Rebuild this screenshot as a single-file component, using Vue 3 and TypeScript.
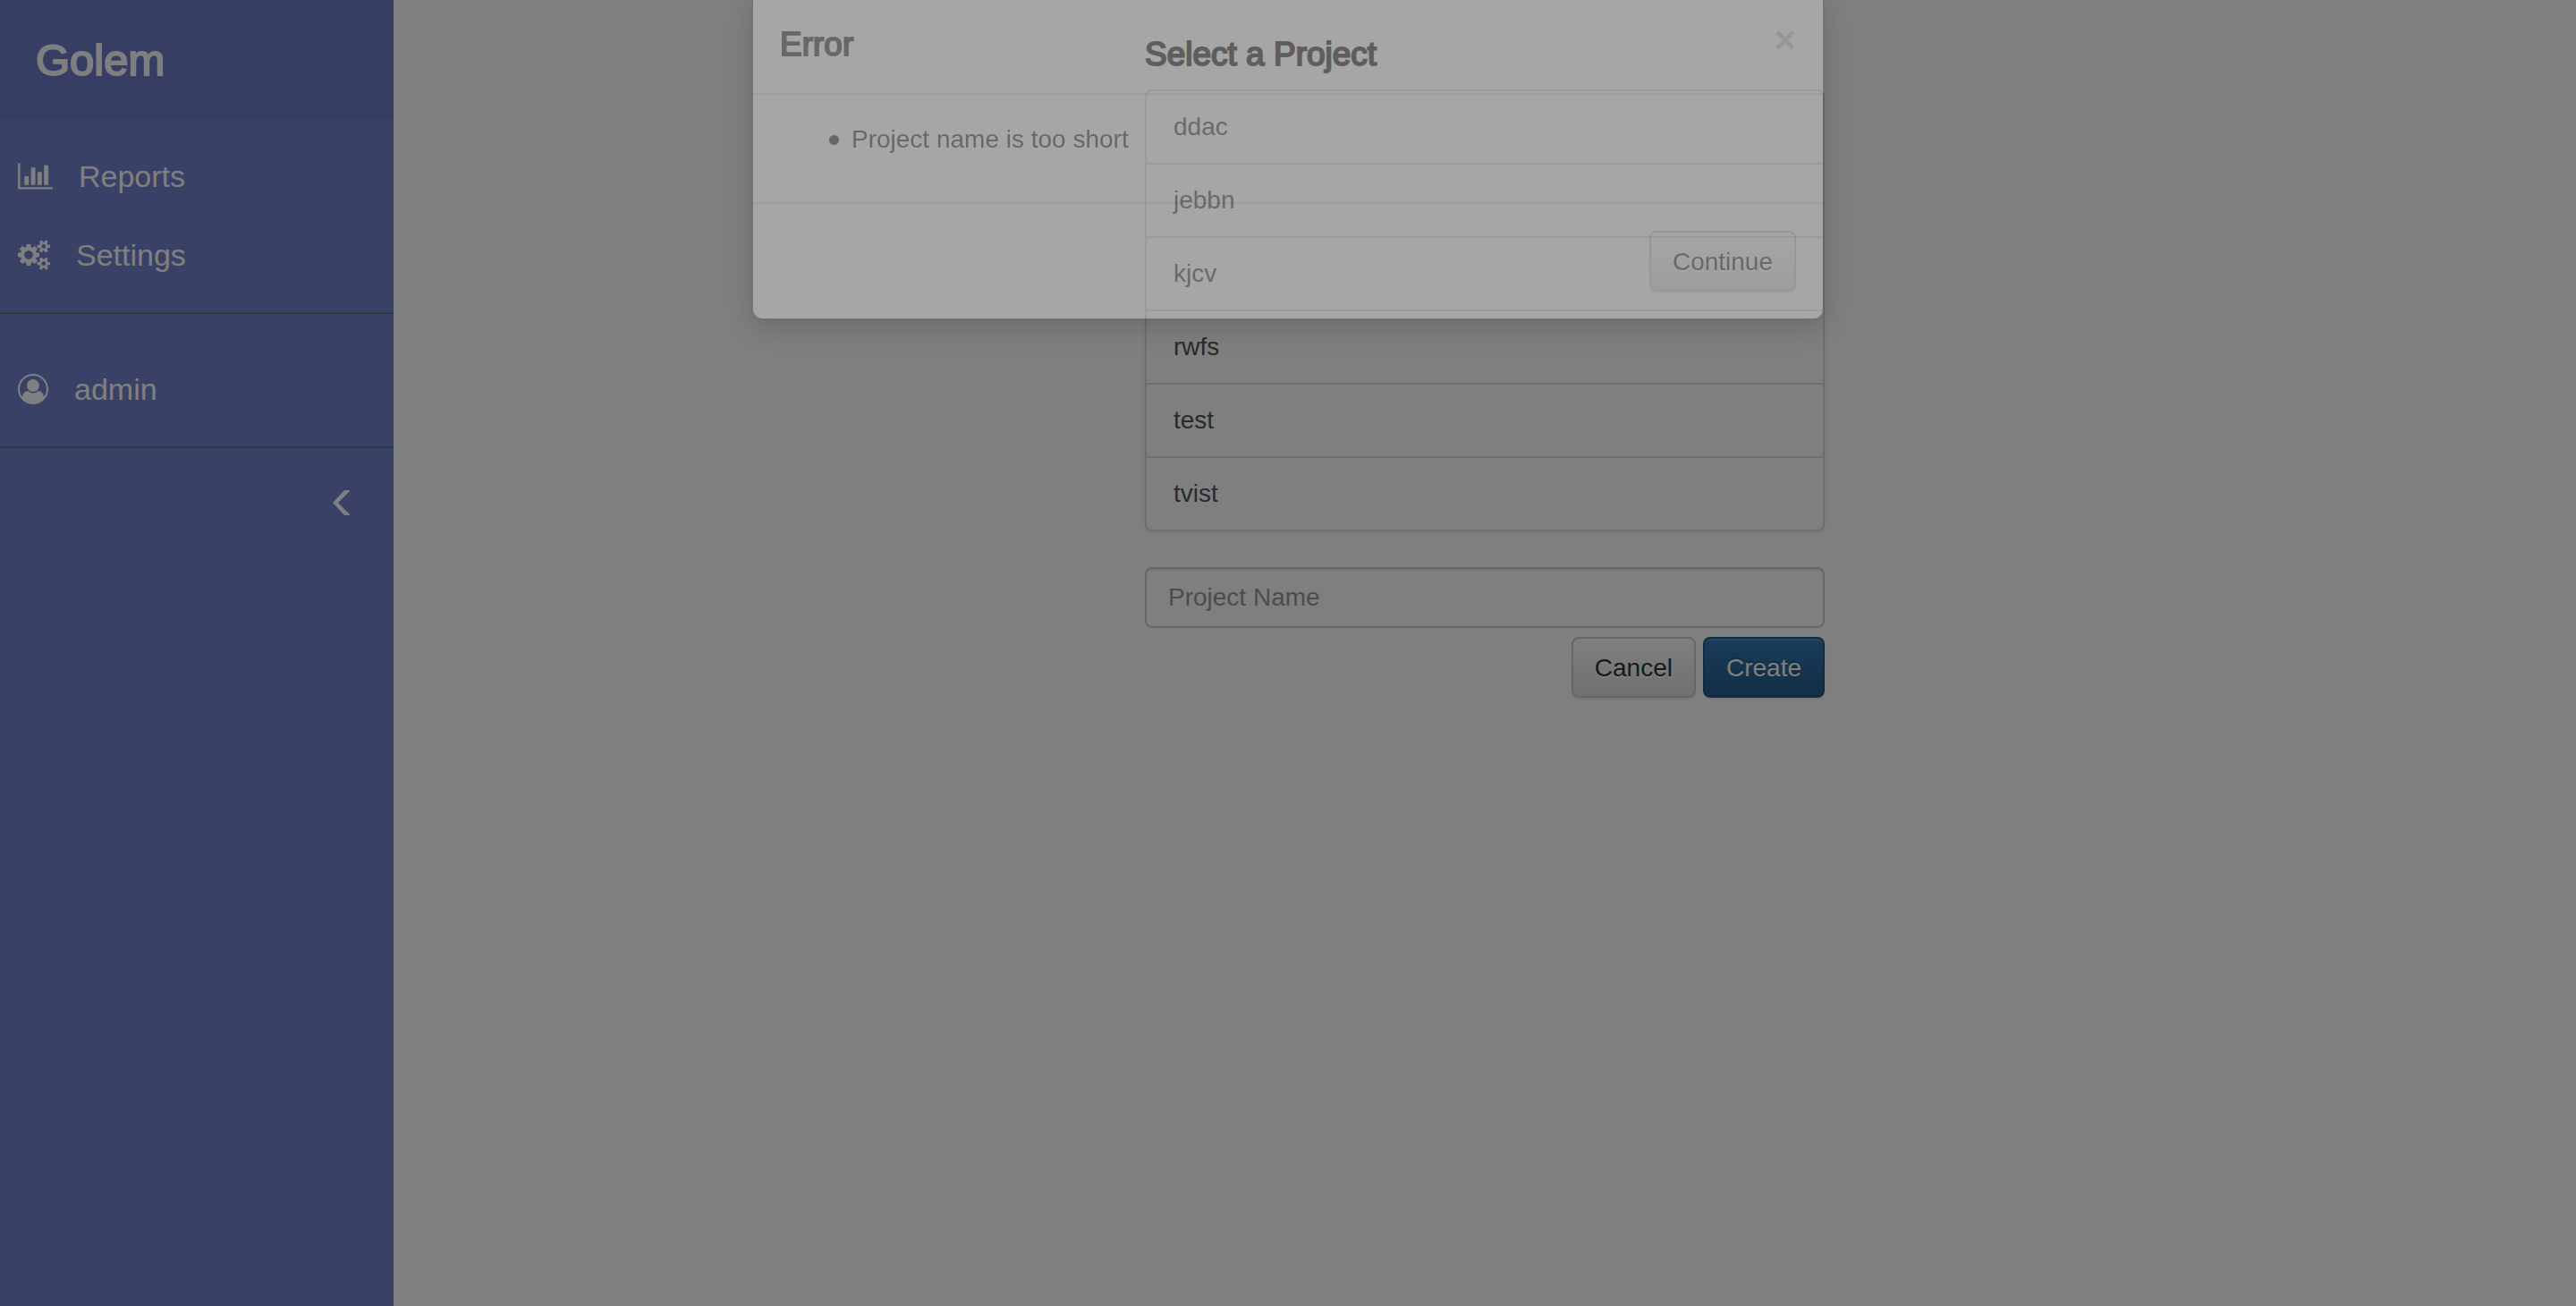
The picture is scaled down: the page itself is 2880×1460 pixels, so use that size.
<script setup lang="ts">
import { ref } from 'vue'

interface Icon {
  width: number
  viewBox: string
  path: string
}

interface NavItem {
  label: string
  icon: Icon
}

const chartIcon: Icon = {
  width: 39,
  viewBox: '0 0 2048 1792',
  path: 'M640 896v512h-256v-512h256zm384-512v1024h-256v-1024h256zm1024 1152v128h-2048v-1536h128v1408h1920zm-640-896v768h-256v-768h256zm384-384v1152h-256v-1152h256z',
}

const cogsIcon: Icon = {
  width: 36,
  viewBox: '0 0 1920 1792',
  path: 'M896 896q0-106-75-181t-181-75-181 75-75 181 75 181 181 75 181-75 75-181zm768 512q0-52-38-90t-90-38-90 38-38 90q0 53 37.5 90.5t90.5 37.5 90.5-37.5 37.5-90.5zm0-1024q0-52-38-90t-90-38-90 38-38 90q0 53 37.5 90.5t90.5 37.5 90.5-37.5 37.5-90.5zm-384 421v185q0 10-7 19.5t-16 10.5l-155 24q-11 35-32 76 34 48 90 115 7 11 7 20 0 12-7 19-23 30-82.5 89.5t-78.5 59.5q-11 0-21-7l-115-90q-37 19-77 31-11 108-23 155-7 24-30 24h-186q-11 0-20-7.5t-10-17.5l-23-153q-34-10-75-31l-118 89q-7 7-20 7-11 0-21-8-144-133-144-160 0-9 7-19 10-14 41-53t47-61q-23-44-35-82l-152-24q-10-1-17-9.5t-7-19.5v-185q0-10 7-19.5t16-10.5l155-24q11-35 32-76-34-48-90-115-7-11-7-20 0-12 7-20 22-30 82-89t79-59q11 0 21 7l115 90q34-18 77-32 11-108 23-154 7-24 30-24h186q11 0 20 7.5t10 17.5l23 153q34 10 75 31l118-89q8-7 20-7 11 0 21 8 144 133 144 160 0 8-7 19-12 16-42 54t-45 60q23 48 34 82l152 23q10 2 17 10.5t7 19.5zm640 533v140q0 16-149 31-12 27-30 52 51 113 51 138 0 4-4 7-122 71-124 71-8 0-46-47t-52-68q-20 2-30 2t-30-2q-14 21-52 68t-46 47q-2 0-124-71-4-3-4-7 0-25 51-138-18-25-30-52-149-15-149-31v-140q0-16 149-31 13-29 30-52-51-113-51-138 0-4 4-7 4-2 35-20t59-34 30-16q8 0 46 46.5t52 67.5q20-2 30-2t30 2q51-71 92-112l6-2q4 0 124 70 4 3 4 7 0 25-51 138 17 23 30 52 149 15 149 31zm0-1024v140q0 16-149 31-12 27-30 52 51 113 51 138 0 4-4 7-122 71-124 71-8 0-46-47t-52-68q-20 2-30 2t-30-2q-14 21-52 68t-46 47q-2 0-124-71-4-3-4-7 0-25 51-138-18-25-30-52-149-15-149-31v-140q0-16 149-31 13-29 30-52-51-113-51-138 0-4 4-7 4-2 35-20t59-34 30-16q8 0 46 46.5t52 67.5q20-2 30-2t30 2q51-71 92-112l6-2q4 0 124 70 4 3 4 7 0 25-51 138 17 23 30 52 149 15 149 31z',
}

const navItems: NavItem[] = [
  { label: 'Reports', icon: chartIcon },
  { label: 'Settings', icon: cogsIcon },
]

const projects: string[] = ['ddac', 'jebbn', 'kjcv', 'rwfs', 'test', 'tvist']
const errors = ref<string[]>(['Project name is too short'])
const projectName = ref('')

function dismiss(): void {
  errors.value = []
}
</script>

<template>
  <div class="page">
    <aside class="sidebar">
      <a class="brand" href="#">Golem</a>
      <nav class="menu">
        <a v-for="item in navItems" :key="item.label" class="menu-item" href="#">
          <svg :width="item.icon.width" height="34" :viewBox="item.icon.viewBox" aria-hidden="true">
            <path :d="item.icon.path" />
          </svg>
          <span>{{ item.label }}</span>
        </a>
      </nav>
      <div class="account">
        <a class="menu-item" href="#">
          <svg width="34" height="34" viewBox="0 0 34 34" aria-hidden="true">
            <circle cx="17" cy="17" r="16" class="ring" />
            <circle cx="17" cy="13" r="7" />
            <path d="M4.5 27C5.3 22 7.5 18.9 11.4 18.9C13 20.7 15 21.4 17 21.4C19 21.4 21 20.7 22.6 18.9C26.5 18.9 28.7 22 29.5 27A16 16 0 0 1 4.5 27Z" />
          </svg>
          <span>admin</span>
        </a>
      </div>
      <button class="collapse" type="button" aria-label="Collapse menu">
        <svg width="19" height="28" viewBox="0 0 19 28" aria-hidden="true">
          <path d="M13 0H19V1L6 14L19 27V28H13L0 14Z" />
        </svg>
      </button>
    </aside>

    <main class="main">
      <section class="chooser">
        <h4 class="heading">Select a Project</h4>
        <div class="list">
          <a v-for="project in projects" :key="project" class="list-item" href="#">{{ project }}</a>
        </div>
        <form class="form" @submit.prevent>
          <input v-model="projectName" class="field" type="text" placeholder="Project Name" aria-label="Project Name" />
          <div class="actions">
            <button class="btn btn-default" type="button">Cancel</button>
            <button class="btn btn-primary" type="submit">Create</button>
          </div>
        </form>
      </section>
    </main>

    <template v-if="errors.length">
      <div class="backdrop"></div>
      <div class="modal" role="dialog" aria-labelledby="error-title">
        <div class="modal-content">
          <header class="modal-header">
            <h4 id="error-title" class="modal-title">Error</h4>
            <button class="close" type="button" aria-label="Close" @click="dismiss">×</button>
          </header>
          <div class="modal-body">
            <ul class="errors">
              <li v-for="error in errors" :key="error" class="error">{{ error }}</li>
            </ul>
          </div>
          <footer class="modal-footer">
            <button class="btn btn-default" type="button" @click="dismiss">Continue</button>
          </footer>
        </div>
      </div>
    </template>
  </div>
</template>

<style>
body {
  margin: 0;
  background: #fff;
}
</style>

<style scoped>
.page,
.page * {
  box-sizing: border-box;
}

.page {
  display: flex;
  min-height: 100vh;
  font-family: "Helvetica Neue", "Liberation Sans", Arial, sans-serif;
  font-size: 28px;
  line-height: 40px;
  color: #333;
}

a {
  text-decoration: none;
}

.sidebar {
  display: flex;
  flex-direction: column;
  flex: 0 0 440px;
  background: #7283cf;
  color: #fff;
}

.brand {
  display: flex;
  align-items: center;
  height: 133px;
  padding: 0 40px;
  background: #6c7dc9;
  color: #fff;
  font-size: 49px;
  -webkit-text-stroke: 2px currentColor;
}

.menu {
  padding: 20px 0;
  border-bottom: 2px solid #4c788a;
}

.account {
  padding: 40px 0 20px;
  border-bottom: 2px solid #4c788a;
}

.menu-item {
  display: flex;
  align-items: center;
  gap: 29px;
  height: 88px;
  padding: 0 20px;
  color: #fff;
  font-size: 34px;
}

svg {
  display: block;
  fill: currentColor;
}

.ring {
  fill: none;
  stroke: currentColor;
  stroke-width: 2;
}

.collapse {
  align-self: flex-end;
  margin: 37px 39px 0 0;
  padding: 10px;
  border: 0;
  background: none;
  color: #fff;
}

.main {
  display: flex;
  flex: 1;
  justify-content: center;
  align-items: flex-start;
  padding-top: 40px;
}

.chooser {
  width: 760px;
}

.heading {
  margin: 0 0 18px;
  font-size: 37px;
  font-weight: 400;
  line-height: 42px;
  -webkit-text-stroke: 2px currentColor;
}

.list {
  display: flex;
  flex-direction: column;
  border: 2px solid #ddd;
  border-radius: 8px;
  box-shadow: 0 2px 4px rgba(0, 0, 0, 0.075);
}

.list-item {
  padding: 20px 30px;
  color: #555;
}

.list-item + .list-item {
  border-top: 2px solid #ddd;
}

.form {
  margin-top: 40px;
}

.field {
  display: block;
  width: 100%;
  height: 68px;
  padding: 12px 24px;
  border: 2px solid #ccc;
  border-radius: 8px;
  background: #fff;
  box-shadow: inset 0 2px 2px rgba(0, 0, 0, 0.075);
  color: #555;
  font: inherit;
}

.field::placeholder {
  color: #999;
  opacity: 1;
}

.actions {
  display: flex;
  justify-content: flex-end;
  gap: 8px;
  margin-top: 10px;
}

.btn {
  height: 68px;
  padding: 13px 24px 11px;
  border: 2px solid #ccc;
  border-radius: 8px;
  font: inherit;
  box-shadow: inset 0 2px 0 rgba(255, 255, 255, 0.15), 0 2px 2px rgba(0, 0, 0, 0.075);
}

.btn-default {
  background: linear-gradient(#fff, #e0e0e0) border-box;
  color: #333;
  text-shadow: 0 2px 0 #fff;
}

.btn-primary {
  border-color: #245580;
  background: linear-gradient(#337ab7, #265a88) border-box;
  color: #fff;
  text-shadow: 0 -2px 0 rgba(0, 0, 0, 0.2);
}

.backdrop {
  position: fixed;
  inset: 0;
  background: rgba(0, 0, 0, 0.5);
}

/* The dialog sits part-way through its slide and fade. */
.modal {
  position: fixed;
  inset: 0;
  display: flex;
  justify-content: center;
  align-items: flex-start;
  opacity: 0.3;
}

.modal-content {
  width: 1200px;
  margin-top: -10px;
  border: 2px solid rgba(0, 0, 0, 0.2);
  border-radius: 12px;
  background: #fff padding-box;
  box-shadow: 0 10px 30px rgba(0, 0, 0, 0.5);
}

.modal-header {
  display: flex;
  justify-content: space-between;
  align-items: flex-start;
  padding: 32px 30px 28px;
  border-bottom: 2px solid #e5e5e5;
}

.modal-title {
  margin: 0;
  font-size: 37px;
  font-weight: 400;
  line-height: 52px;
  -webkit-text-stroke: 2px currentColor;
}

.close {
  padding: 0;
  border: 0;
  background: none;
  color: #000;
  font-family: inherit;
  font-size: 42px;
  font-weight: 700;
  line-height: 42px;
  text-shadow: 0 2px 0 #fff;
  opacity: 0.2;
}

.modal-body {
  padding: 30px;
}

.errors {
  margin: 0 0 20px;
  padding-left: 55px;
  list-style: none;
}

.error {
  display: flex;
  align-items: center;
  gap: 14px;
}

.error::before {
  content: "";
  width: 11px;
  height: 11px;
  border-radius: 50%;
  background: currentColor;
}

.modal-footer {
  display: flex;
  justify-content: flex-end;
  padding: 30px;
  border-top: 2px solid #e5e5e5;
}
</style>
